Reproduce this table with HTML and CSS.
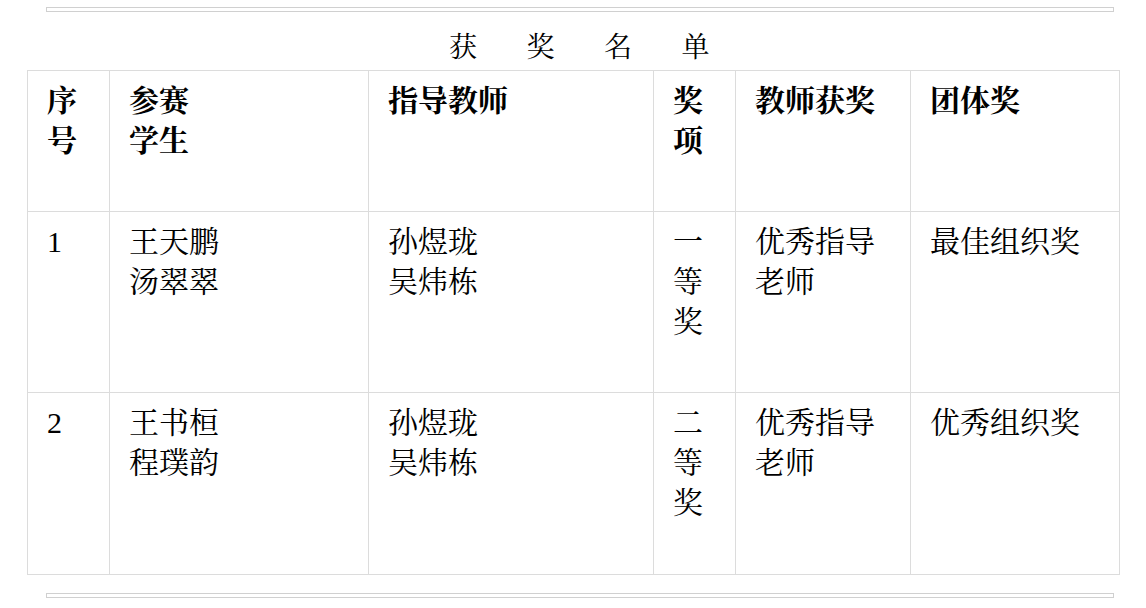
FILE: index.html
```html
<!DOCTYPE html>
<html lang="zh-CN">
<head>
<meta charset="utf-8">
<title>获奖名单</title>
<link rel="stylesheet" href="styles.css">
</head>
<body>
<hr class="rule rule-top">
<h1 class="title">获奖名单</h1>
<table class="awards">
  <colgroup>
    <col class="c1"><col class="c2"><col class="c3"><col class="c4"><col class="c5"><col class="c6">
  </colgroup>
  <thead>
    <tr>
      <th>序号</th>
      <th>参赛<br>学生</th>
      <th>指导教师</th>
      <th>奖项</th>
      <th>教师获奖</th>
      <th>团体奖</th>
    </tr>
  </thead>
  <tbody>
    <tr>
      <td>1</td>
      <td>王天鹏<br>汤翠翠</td>
      <td>孙煜珑<br>吴炜栋</td>
      <td>一等奖</td>
      <td>优秀指导老师</td>
      <td>最佳组织奖</td>
    </tr>
    <tr class="last">
      <td>2</td>
      <td>王书桓<br>程璞韵</td>
      <td>孙煜珑<br>吴炜栋</td>
      <td>二等奖</td>
      <td>优秀指导老师</td>
      <td>优秀组织奖</td>
    </tr>
  </tbody>
</table>
<hr class="rule rule-bottom">
</body>
</html>
```

FILE: styles.css
```css
html, body {
  margin: 0;
  padding: 0;
  background: #ffffff;
}

body {
  font-family: "Liberation Serif", "Noto Serif CJK SC", "Noto Sans CJK SC", serif;
  color: #000000;
  width: 1146px;
}

.rule {
  box-sizing: border-box;
  height: 5px;
  width: 1068px;
  margin: 0 0 0 46px;
  border: 1px solid #d0d0d0;
  background: #ffffff;
}

.rule-top {
  margin-top: 7px;
}

.rule-bottom {
  margin-top: 18px;
}

.title {
  margin: 0;
  padding: 14px 0 0 62px;
  font-size: 28px;
  font-weight: normal;
  line-height: 44px;
  letter-spacing: 49.5px;
  text-align: center;
}

.awards {
  border-collapse: collapse;
  table-layout: fixed;
  width: 1092px;
  margin-left: 27px;
  font-size: 30px;
  line-height: 40px;
}

.awards th,
.awards td {
  border: 1px solid #dcdcdc;
  padding: 10px 20px 50px 19px;
  vertical-align: top;
  text-align: left;
}

.awards .last td {
  padding-bottom: 51px;
}

.awards th {
  font-weight: bold;
}

.c1 { width: 82px; }
.c2 { width: 259px; }
.c3 { width: 285px; }
.c4 { width: 82px; }
.c5 { width: 175px; }
.c6 { width: 209px; }
```
